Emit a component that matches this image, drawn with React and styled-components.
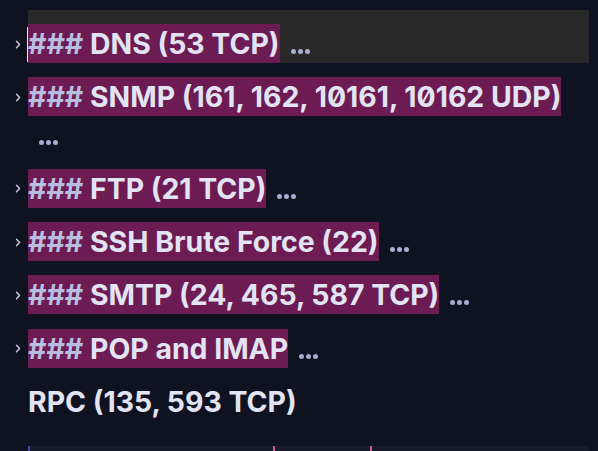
import React from "react";
import styled, { createGlobalStyle } from "styled-components";

const Global = createGlobalStyle`
  html, body { margin: 0; padding: 0; background: #0f1221; }
  body { font-family: Inter, "Noto Sans", sans-serif; }
`;

const Editor = styled.div`
  width: 598px;
  height: 451px;
  overflow: hidden;
  background: #0f1221;
  padding-top: 10px;
  box-sizing: border-box;
  display: flex;
  flex-direction: column;
`;

const Line = styled.div`
  display: flex;
  align-items: stretch;
`;

const Gutter = styled.div`
  width: 28px;
  flex: none;
  display: flex;
  justify-content: center;
  padding-top: 15px;
  padding-left: 7px;
  box-sizing: border-box;
`;

const ChevronBox = styled.div`
  height: 38px;
  display: flex;
  align-items: center;
  color: #c9cde0;
`;

const Content = styled.div`
  width: 561px;
  flex: none;
  padding-top: 15px;
  background: ${(p) => (p.$active ? "#282828" : "transparent")};
  font-size: 28.4px;
  font-weight: 700;
  line-height: 38.3px;
  color: #e2e4f3;
  letter-spacing: 0;
  font-feature-settings: "zero" 1;
`;

const Heading = styled.span`
  position: relative;
  background: #6c1b53;
  padding: 2px 0;
`;

const Cursor = styled.span`
  position: absolute;
  left: -1px;
  top: 3px;
  width: 1px;
  height: 35px;
  background: #e8e8f0;
`;

const Hash = styled.span`
  color: #b7bee0;
`;

const Fold = styled.span`
  display: inline-flex;
  gap: 2px;
  margin-left: 11px;
  vertical-align: middle;
  position: relative;
  top: 5px;
`;

const Dot = styled.span`
  width: 5px;
  height: 5px;
  border-radius: 50%;
  background: #a7aed0;
`;

const Spacer = styled.div`
  flex: 1;
`;

const Footer = styled.div`
  margin-left: 28px;
  width: 561px;
  height: 5px;
  background: #151a2c;
  border-left: 2px solid #3d4f9a;
  box-sizing: border-box;
  display: flex;
`;

const Mark = styled.span`
  width: 2px;
  height: 5px;
  background: #d0609a;
  margin-left: ${(p) => p.$at}px;
`;

const Chevron = () => (
  <svg width="6" height="9" viewBox="0 0 6 9" fill="none">
    <path d="M1.5 1.2 L4.6 4.5 L1.5 7.8" stroke="currentColor" strokeWidth="1.4" strokeLinecap="round" strokeLinejoin="round" />
  </svg>
);

const Ellipsis = () => (
  <Fold>
    <Dot />
    <Dot />
    <Dot />
  </Fold>
);

const rows = [
  { title: "DNS (53 TCP)", active: true },
  { title: "SNMP (161, 162, 10161, 10162 UDP)" },
  { title: "FTP (21 TCP)" },
  { title: "SSH Brute Force (22)" },
  { title: "SMTP (24, 465, 587 TCP)" },
  { title: "POP and IMAP" },
];

export default function App() {
  return (
    <>
      <Global />
      <Editor>
        {rows.map((r) => (
          <Line key={r.title}>
            <Gutter>
              <ChevronBox>
                <Chevron />
              </ChevronBox>
            </Gutter>
            <Content $active={r.active}>
              <Heading>
                {r.active && <Cursor />}
                <Hash>###</Hash> {r.title}
              </Heading>
              <Ellipsis />
            </Content>
          </Line>
        ))}
        <Line>
          <Gutter />
          <Content>RPC (135, 593 TCP)</Content>
        </Line>
        <Spacer />
        <Footer>
          <Mark $at={243} />
          <Mark $at={95} />
        </Footer>
      </Editor>
    </>
  );
}
